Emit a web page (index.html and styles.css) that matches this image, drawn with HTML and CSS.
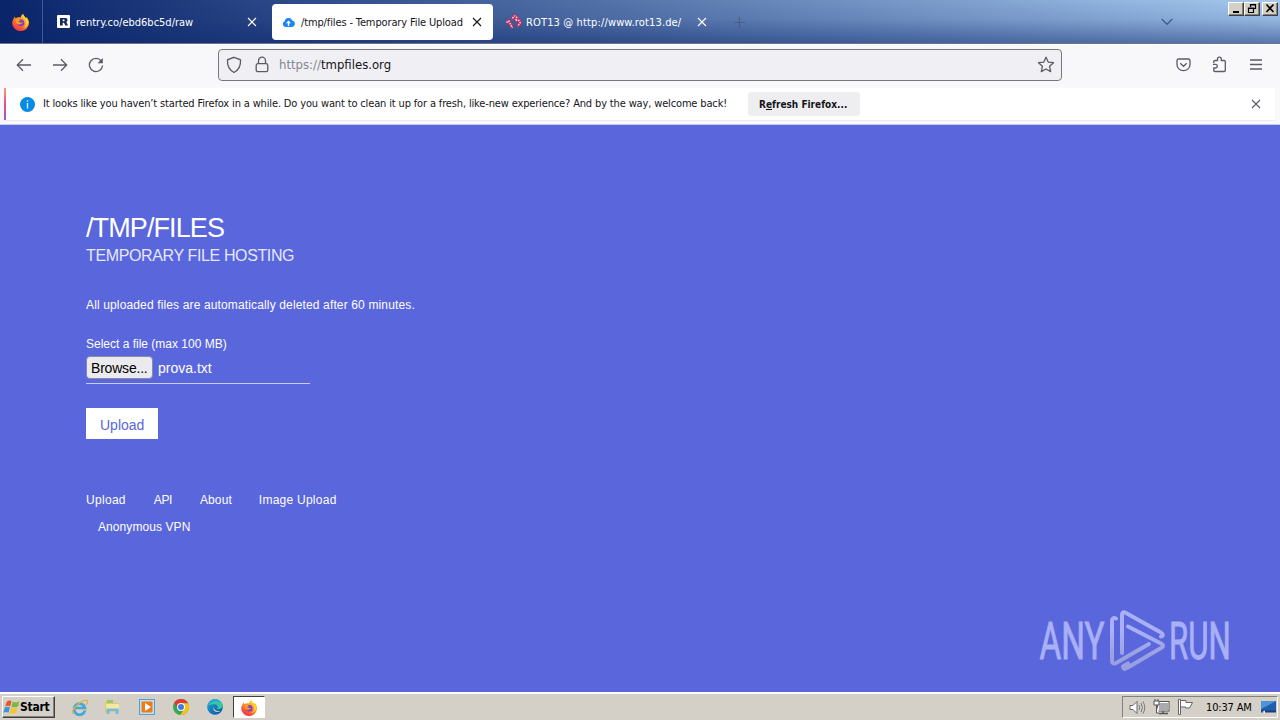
FILE: index.html
```html
<!DOCTYPE html>
<html lang="en">
<head>
<meta charset="utf-8">
<title>/tmp/files - Temporary File Upload</title>
<link rel="stylesheet" href="styles.css">
</head>
<body>
<svg width="0" height="0" class="defs">
  <defs>
    <linearGradient id="fx" x1="0.8" y1="0" x2="0.2" y2="1"><stop offset="0" stop-color="#ffe226"/><stop offset=".45" stop-color="#ff8a1f"/><stop offset="1" stop-color="#f5264c"/></linearGradient>
    <linearGradient id="edge" x1="0" y1="0" x2="1" y2="1"><stop offset="0" stop-color="#1fa8d8"/><stop offset="1" stop-color="#0c4fa0"/></linearGradient>
    <symbol id="firefox" viewBox="0 0 16 16">
      <path d="M1 5.500 2.500 2.500l1 1.500C5 3 7 3 8 3.500 8.500 1.500 9.500.6 10.500 0c.2 1.600 1.600 2.400 2.600 3.700L14 3c1.300 1.700 2 3.700 2 5.500A7.800 7.500 0 0 1 .2 8.500C.2 7.300.5 6.300 1 5.500z" fill="url(#fx)"/>
      <circle cx="8.200" cy="8.200" r="3.300" fill="#8141c9"/>
      <path d="M3.500 5c2-.7 4 .2 4.600 1.200-1.200.2-2 .7-2.200 1.400 1.300-.2 2 1.300 4.200.2C9.500 10 5.500 10.600 4 8.500z" fill="#ff9a24"/>
      <path d="M9.500 1.500c.5 2.200 3 3 3.500 6.500.3 2.500-1 4.200-2.700 5 3-.2 5-2.300 5-5.200C15.300 4 11 4 10.500.3z" fill="#ffd52e"/>
    </symbol>
    <symbol id="cross" viewBox="0 0 10 10"><path d="M1 1l8 8M9 1 1 9" fill="none" stroke="currentColor" stroke-width="1.100"/></symbol>
  </defs>
</svg>
<div class="screen">
  <header class="tabbar">
    <svg class="home-logo" width="17" height="17"><use href="#firefox"/></svg>
    <div class="tab tab-first">
      <svg class="fav" width="13" height="13" viewBox="0 0 13 13"><rect width="13" height="13" rx="1" fill="#fff"/><path d="M3 3H8.500Q10.500 3 10.500 5 10.500 6.500 9.300 7L11 10.500H8.300L7 7.800H5.700V10.500H3z" fill="#17265d"/><path d="M5.700 4.500H7.500V6.200H5.700z" fill="#fff"/></svg>
      <span class="label t1">rentry.co/ebd6bc5d/raw</span>
      <svg class="close" width="10" height="10"><use href="#cross"/></svg>
    </div>
    <div class="tab tab-active">
      <svg class="fav" width="13" height="11" viewBox="0 0 13 11"><path d="M3.200 10A3 3 0 0 1 2.600 4.300 4 4 0 0 1 10.200 3.500 3.300 3.300 0 0 1 10 10z" fill="#1b85f3"/><path d="M6.500 3.500 9 6.300H7.200V9H5.800V6.300H4z" fill="#fff"/></svg>
      <span class="label t2">/tmp/files - Temporary File Upload</span>
      <svg class="close" width="10" height="10"><use href="#cross"/></svg>
    </div>
    <div class="tab tab-last">
      <svg class="fav" width="17" height="16" viewBox="0 0 17 16" fill="none"><path d="M1.500 8.500 3.800 7 7.500 14M7.500 4.500Q9.500.5 11.500 3 12.500 5 10 6.500 14 5.500 15 8 15.500 10.500 12 11.500" stroke="#c72c58" stroke-width="3.400"/><path d="M1.500 8.500 3.800 7 7.500 14M7.500 4.500Q9.500.5 11.500 3 12.500 5 10 6.500 14 5.500 15 8 15.500 10.500 12 11.500" stroke="#e6d3e4" stroke-width="1.500" stroke-dasharray="1.500 1"/></svg>
      <span class="label t3">ROT13 @ http://www.rot13.de/</span>
      <svg class="close" width="10" height="10"><use href="#cross"/></svg>
    </div>
    <svg class="plus" width="11" height="11" viewBox="0 0 11 11"><path d="M5.500 0v11M0 5.500h11" stroke="#4b5d88" stroke-width="1.200"/></svg>
    <svg class="chev" width="12" height="8" viewBox="0 0 12 8"><path d="M.7 1 6 6.300 11.300 1" fill="none" stroke="#405e8c" stroke-width="1.400"/></svg>
    <div class="winbtns">
      <i class="wb"><svg width="12" height="11" viewBox="0 0 12 11"><path d="M3 8h6v2H3z"/></svg></i>
      <i class="wb"><svg width="12" height="11" viewBox="0 0 12 11"><path d="M4.500 4V1.500h5v4H8M4 2h6" fill="none" stroke="#000" stroke-width="1.200"/><path d="M2.500 5h5v4.500h-5zM2 5.300h6" fill="none" stroke="#000" stroke-width="1.200"/></svg></i>
      <i class="wb wb-x"><svg width="12" height="11" viewBox="0 0 12 11"><path d="M2.500 1.500l7 7.500M9.500 1.500l-7 7.500" stroke="#000" stroke-width="1.700"/></svg></i>
    </div>
  </header>

  <nav class="toolbar">
    <svg class="i-back" width="16" height="14" viewBox="0 0 16 14"><path d="M15 7H1.500M7 1.300 1.300 7 7 12.700" class="line"/></svg>
    <svg class="i-fwd" width="16" height="14" viewBox="0 0 16 14"><path d="M1 7h13.500M9 1.300 14.700 7 9 12.700" class="line"/></svg>
    <svg class="i-reload" width="16" height="16" viewBox="0 0 16 16"><path d="M13.300 4A6.600 6.600 0 1 0 14.600 8.500" class="line"/><path d="M14.800 1v5.200H9.500z" fill="#5b5b66"/></svg>
    <div class="urlbar">
      <svg class="i-shield" width="16" height="18" viewBox="0 0 16 18"><path d="M8 1.300 14.500 3.800c.4 5.500-1.500 10-6.500 12.700C3 13.800 1.100 9.300 1.500 3.800z" class="line"/></svg>
      <svg class="i-lock" width="14" height="17" viewBox="0 0 14 17"><rect x="1.200" y="7.700" width="11.600" height="8" rx="1.700" class="line"/><path d="M3.500 7.500V4.700a3.500 3.500 0 0 1 7 0v2.800" class="line"/></svg>
      <span class="label url"><span class="dim">https://</span>tmpfiles.org</span>
      <svg class="i-star" width="18" height="17" viewBox="0 0 18 17"><path d="M9 1.200l2.200 4.900 5.300.6-3.900 3.600 1.100 5.300L9 13l-4.700 2.600 1.100-5.300L1.500 6.700l5.300-.6z" class="line" stroke-linejoin="round"/></svg>
    </div>
    <svg class="i-pocket" width="15" height="14" viewBox="0 0 15 14"><path d="M2.500 1h10A1.500 1.500 0 0 1 14 2.500V6.500a6.500 6.200 0 0 1-13 0V2.500A1.500 1.500 0 0 1 2.500 1z" class="line"/><path d="M4.300 5.200 7.500 8.300l3.200-3.100" class="line"/></svg>
    <svg class="i-ext" width="15" height="17" viewBox="0 0 15 17"><path d="M1.800 7V5.500Q1.800 4.500 2.800 4.500H5.500V3a1.900 1.900 0 0 1 3.800 0V4.500h3Q13.300 4.500 13.300 5.500V14.500Q13.300 15.500 12.300 15.500H2.800Q1.800 15.500 1.800 14.500V12H3.500a1.800 1.800 0 0 0 0-3.600H1" class="line"/></svg>
    <svg class="i-menu" width="12" height="11" viewBox="0 0 12 11"><path d="M0 1h12M0 5.500h12M0 10h12" class="line"/></svg>
  </nav>

  <div class="noticewrap">
    <div class="notice">
      <svg class="i-info" width="15" height="15" viewBox="0 0 15 15"><circle cx="7.500" cy="7.500" r="7.500" fill="#078ce5"/><path d="M7.500 6v5.500M7.500 3.200v1.500" stroke="#dff2ff" stroke-width="1.300"/></svg>
      <span class="label msg">It looks like you haven’t started Firefox in a while. Do you want to clean it up for a fresh, like-new experience? And by the way, welcome back!</span>
      <button class="refresh"><span class="label rf">R<u>e</u>fresh Firefox...</span></button>
      <svg class="n-close" width="10" height="10"><use href="#cross"/></svg>
    </div>
  </div>

  <main class="page">
    <h1><span class="label h-a">/TMP/FILES</span></h1>
    <h2><span class="label h-b">TEMPORARY FILE HOSTING</span></h2>
    <p class="info"><span class="label p-a">All uploaded files are automatically deleted after 60 minutes.</span></p>
    <p class="select"><span class="label p-b">Select a file (max 100 MB)</span></p>
    <div class="file"><span class="browse"><span class="label b-a">Browse...</span></span><span class="label b-b">prova.txt</span></div>
    <button class="upload"><span class="label b-c">Upload</span></button>
    <ul class="links">
      <li>Upload</li><li class="api">API</li><li class="about">About</li><li class="image">Image Upload</li>
    </ul>
    <div class="links vpn">Anonymous VPN</div>
    <svg class="watermark" width="210" height="68" viewBox="0 0 210 68">
      <defs><linearGradient id="wmg" gradientUnits="userSpaceOnUse" x1="0" y1="0" x2="0" y2="66"><stop offset=".35" stop-color="#a9b0f6"/><stop offset=".75" stop-color="#9a9fdf"/></linearGradient></defs>
      <g fill="url(#wmg)" stroke="url(#wmg)" stroke-width=".9" font-family="Roboto, sans-serif" font-size="52">
        <text transform="translate(4.500 51) scale(.64 1)">ANY</text>
        <text transform="translate(134 51) scale(.6 1)">RUN</text>
      </g>
      <g fill="none" stroke="url(#wmg)" stroke-width="4" stroke-linejoin="round" stroke-linecap="round">
        <path d="M81 10.500Q77 9 77 13V52Q77 57 81 55L114 36"/>
        <path d="M87 45V7Q87 3 91 5L125 24Q130 27 126 28.500"/>
        <path d="M93 18.500 126 35.500Q130 37.500 126 40L92 60Q88 62 88 58.500L93 55.500"/>
      </g>
    </svg>
  </main>

  <footer class="taskbar">
    <div class="start">
      <svg width="17" height="16" viewBox="0 0 16 15"><path d="M3.500 2.500Q6 .5 8 2L6.800 7Q4.500 5.500 2 7z" fill="#e8572a"/><path d="M9 2.500Q12 4 15.500 2L14 7Q11 8.500 8 7.200z" fill="#7cb83b"/><path d="M1.700 8Q4 6.500 6.500 8L5.200 13Q3 11.500.3 13z" fill="#4293d8"/><path d="M7.500 8.300Q10.500 9.500 13.800 8L12.300 13Q9.500 14.500 6.200 13.300z" fill="#f8c532"/></svg>
      <span class="label st">Start</span>
    </div>
    <svg class="q-ie" width="17" height="17" viewBox="0 0 17 17"><path d="M14 11.500A5.500 5.500 0 1 1 14 9H4" fill="none" stroke="#43a7dc" stroke-width="2.700"/><path d="M2 15C-1 11 11 0 16 1.500c1.200.8.2 3-.7 4.200" fill="none" stroke="#dfb43b" stroke-width="1.300"/></svg>
    <svg class="q-ex" width="17" height="16" viewBox="0 0 17 16"><path d="M1 2.500h6l1 1.500h7v9H1z" fill="#e9c765"/><path d="M3 1h6v3H3z" fill="#8dcb7c"/><path d="M2 5h13v5H2z" fill="#f8e7a3"/><path d="M2.500 15V9.500h12V15h-3v-3h-6v3z" fill="#74bde1"/></svg>
    <svg class="q-wm" width="16" height="16" viewBox="0 0 16 16"><rect x=".5" y=".5" width="15" height="15" fill="#bfe0f3" stroke="#55a0cf"/><rect x="2.500" y="2.500" width="11" height="11" rx="1" fill="#f07a16"/><path d="M6 4 12 8 6 12z" fill="#fff"/></svg>
    <svg class="q-cr" width="16" height="16" viewBox="0 0 16 16"><circle cx="8" cy="8" r="8" fill="#34a853"/><path d="M1.100 4A8 8 0 0 1 15 4.200H8L5 9.500z" fill="#e33b2e"/><path d="M15 4.200A8 8 0 0 1 7.300 16L11.500 9.500 10 4.200z" fill="#fbc116"/><circle cx="8" cy="8" r="4" fill="#fff"/><circle cx="8" cy="8" r="3" fill="#3c7ee8"/></svg>
    <svg class="q-ed" width="17" height="16" viewBox="0 0 17 16"><circle cx="8" cy="8" r="7.800" fill="url(#edge)"/><path d="M.5 7C2 0 11-2 15 4c2.200 4-.8 6.800-5 6 1.700-2.500 0-4.800-2.800-4.800C4 5.200 1.500 6 .5 7z" fill="#38c7a0"/><path d="M.5 7C2-.5 10-2 14 3 9 1.500 3 3 .5 7z" fill="#27a9d3"/><path d="M7.500 6.500c-2 3 1 6.500 6.500 5.300C10 14.500 4 12 7.500 6.500z" fill="#d5d2cb"/></svg>
    <div class="running"><svg width="16" height="16"><use href="#firefox"/></svg></div>
    <div class="tray">
      <svg class="s-vol" width="17" height="15" viewBox="0 0 17 15"><path d="M1 5.500h3L8 1.500v12L4 9.500H1z" fill="#fff" stroke="#666"/><path d="M10 5q1.500 2.500 0 5M12 3q3 4.500 0 9M14 1.500q3.500 6 0 12" fill="none" stroke="#777"/></svg>
      <svg class="s-net" width="17" height="16" viewBox="0 0 17 16"><rect x="5.500" y="3.500" width="10" height="8" fill="#aaa" stroke="#fff"/><rect x="4.500" y="2.500" width="11.500" height="9.500" fill="none" stroke="#555"/><path d="M6 14.500h9M10 12v2" stroke="#555" stroke-width="1.500"/><path d="M1 2h5v4H1zM3.500 6v8H6M2 0v2M5 0v2" fill="#fff" stroke="#555"/></svg>
      <svg class="s-flag" width="17" height="16" viewBox="0 0 17 16"><path d="M1.500.5h2v15h-2z" fill="#fff" stroke="#666"/><path d="M3.500 1.500h5.500v2h6.500l-3 5.500H8.500V8h-5z" fill="#fff" stroke="#666"/></svg>
      <span class="label clock">10:37 AM</span>
      <svg class="s-desk" width="15" height="13" viewBox="0 0 15 13"><rect width="15" height="11" fill="#1f5fae"/><path d="M0 0h15L0 8z" fill="#4f94d6"/><path d="M0 9.500h15v2H0z" fill="#163f7c"/><path d="M1 11l3-1.500v3z" fill="#eee"/></svg>
    </div>
  </footer>
</div>
</body>
</html>
```

FILE: styles.css
```css
* { box-sizing: border-box; }
body { margin: 0; font-family: "DejaVu Sans Condensed", "DejaVu Sans", sans-serif; }
svg { flex: none; display: block; }
.defs { position: absolute; }
.screen { width: 1280px; height: 720px; display: flex; flex-direction: column; overflow: hidden; }
.label { white-space: nowrap; display: block; flex: none; }
.line { fill: none; stroke: #5b5b66; stroke-width: 1.3; }

.tabbar { height: 44px; flex: none; display: flex; align-items: flex-start; color: #fff; font-size: 11px; border-bottom: 1px solid #6d7388;
  background: linear-gradient(180deg, rgba(10,36,106,0) 0%, rgba(10,36,106,.12) 45%, rgba(10,36,106,.5) 100%), linear-gradient(90deg, #0a246a, #a6caf0); }
.home-logo { margin: 14px 0 0 12px; }
.tab { height: 36px; margin-top: 4px; display: flex; align-items: center; }
.tab .label { line-height: 36px; margin-top: 2px; }
.tab-first { width: 229px; height: 43px; margin: 0 0 0 13px; padding: 0 14px 0 14px; border-left: 1px solid #46588e; }
.tab-first .label { margin: 2px auto 0 6px; }
.tab-active { width: 221px; margin-left: 1px; border-radius: 4px; background: #fff; color: #15141a; padding: 0 11px 0 10px; }
.tab-active .label { margin-left: 6px; margin-right: auto; }
.tab-last { width: 216px; padding: 0 2px 0 12px; }
.tab-last .label { margin-left: 4px; margin-right: auto; }
.t2 { letter-spacing: -.13px; }
.t3 { letter-spacing: .14px; }
.plus { margin: 17px 0 0 25px; }
.chev { margin: 18px 0 0 416px; }
.winbtns { display: flex; margin: 2px 0 0 55px; }
.wb { width: 16px; height: 14px; background: #d4d0c8; border: 1px solid; border-color: #fff #404040 #404040 #fff; box-shadow: inset -1px -1px #808080; display: block; padding-left: 1px; }
.wb-x { margin-left: 2px; }

.toolbar { height: 44px; flex: none; display: flex; align-items: center; background: #f8f8fb; padding-bottom: 4px; border-top: 1px solid #fff; }
.i-back { margin-left: 16px; }
.i-fwd { margin-left: 20px; }
.i-reload { margin-left: 20px; }
.urlbar { width: 844px; height: 32px; margin-left: 114px; border: 1px solid #77777f; border-radius: 4px; background: #f0f0f4; display: flex; align-items: center; padding-left: 7px; }
.i-lock { margin-left: 13px; }
.url { margin-left: 10px; font-size: 13px; color: #15141a; }
.dim { color: #85858d; }
.i-star { margin: 0 6px 0 auto; }
.i-pocket { margin-left: 114px; }
.i-ext { margin-left: 21px; }
.i-menu { margin-left: 23px; }

.noticewrap { height: 37px; flex: none; background: #f8f8fb; border-bottom: 1px solid #c1cbfb; padding: 0 5px 0 4px; }
.notice { height: 32px; display: flex; align-items: center; background: #fff; box-shadow: 0 1px #e9ebe8; border-left: 2px solid; border-image: linear-gradient(#ff9a70, #e0508c 50%, #a454e0) 0 0 0 1; padding-left: 14px; }
.msg { width: 684px; margin: -1px 0 0 8px; font-size: 11px; letter-spacing: -.148px; color: #15141a; }
.refresh { width: 112px; height: 24px; margin-left: 21px; padding: 0 0 0 11px; border: 0; border-radius: 4px; background: #eeeef0; color: #15141a; text-align: left; font: bold 10px "DejaVu Sans Condensed", "DejaVu Sans", sans-serif; }
.n-close { margin: 0 14px 0 auto; color: #5b5b66; }

.page { flex: 1; min-height: 0; position: relative; background: #5966dc; color: #fff; padding: 87px 0 0 86px; font-family: "Liberation Sans", Arial, sans-serif; }
h1, h2, p, ul { margin: 0; padding: 0; font-weight: 400; }
h1 { font-size: 27px; line-height: 32px; letter-spacing: -.9px; }
h2 { font-size: 16px; line-height: 24px; letter-spacing: -.37px; }
.h-b { color: #e6e8ff; }
.info { font-size: 12px; line-height: 18px; margin-top: 28px; letter-spacing: .14px; }
.select { font-size: 12px; line-height: 18px; margin-top: 21px; }
.file { width: 224px; height: 28px; margin-top: 3px; border-bottom: 1px solid #c9cdf5; display: flex; font-size: 14px; line-height: 24px; }
.browse { width: 67px; height: 23px; border: 1px solid #8b8ba8; border-radius: 4px; background: #ebebef; color: #000; padding-left: 4px; line-height: 22px; margin-right: 5px; letter-spacing: -.2px; }
.upload { display: block; width: 72px; height: 31px; margin-top: 24px; border: 0; background: #fff; color: #5966dc; padding: 2px 0 0 14px; text-align: left; font: 14px "Liberation Sans", Arial, sans-serif; }
.links { display: flex; list-style: none; font-size: 12px; line-height: 18px; margin-top: 52px; gap: 28px; letter-spacing: .3px; }
.api { letter-spacing: -.4px; }
.about { letter-spacing: .1px; }
.image { letter-spacing: .25px; margin-left: -1px; }
.vpn { margin: 9px 0 0 12px; letter-spacing: .08px; }
.watermark { position: absolute; left: 1035px; top: 483px; }

.taskbar { height: 28px; flex: none; display: flex; background: #d4d0c8; border-top: 2px solid #fff; font-size: 11px; box-shadow: 0 -1px #d4d0c8; }
.start { width: 53px; height: 22px; margin: 2px 0 0 2px; border: 1px solid; border-color: #fff #404040 #404040 #fff; box-shadow: inset -1px -1px #808080; display: flex; align-items: center; font-weight: 700; font-size: 12px; letter-spacing: -.25px; }
.q-ie { margin: 5px 0 0 16px; }
.q-ex { margin: 5px 0 0 16px; }
.q-wm { margin: 5px 0 0 18px; }
.q-cr { margin: 5px 0 0 18px; }
.q-ed { margin: 5px 0 0 18px; }
.running { width: 32px; height: 22px; margin: 2px 0 0 9px; border: 1px solid; border-color: #404040 #fff #fff #404040; background: #fff; padding: 3px 0 0 7px; }
.tray { width: 156px; height: 22px; margin: 2px 2px 0 auto; border: 1px solid; border-color: #808080 #fff #fff #808080; display: flex; align-items: center; padding-left: 6px; }
.s-net { margin-left: 7px; }
.s-flag { margin-left: 7px; }
.clock { margin-left: 12px; letter-spacing: -.15px; }
.s-desk { margin: 0 1px 0 auto; }
```
